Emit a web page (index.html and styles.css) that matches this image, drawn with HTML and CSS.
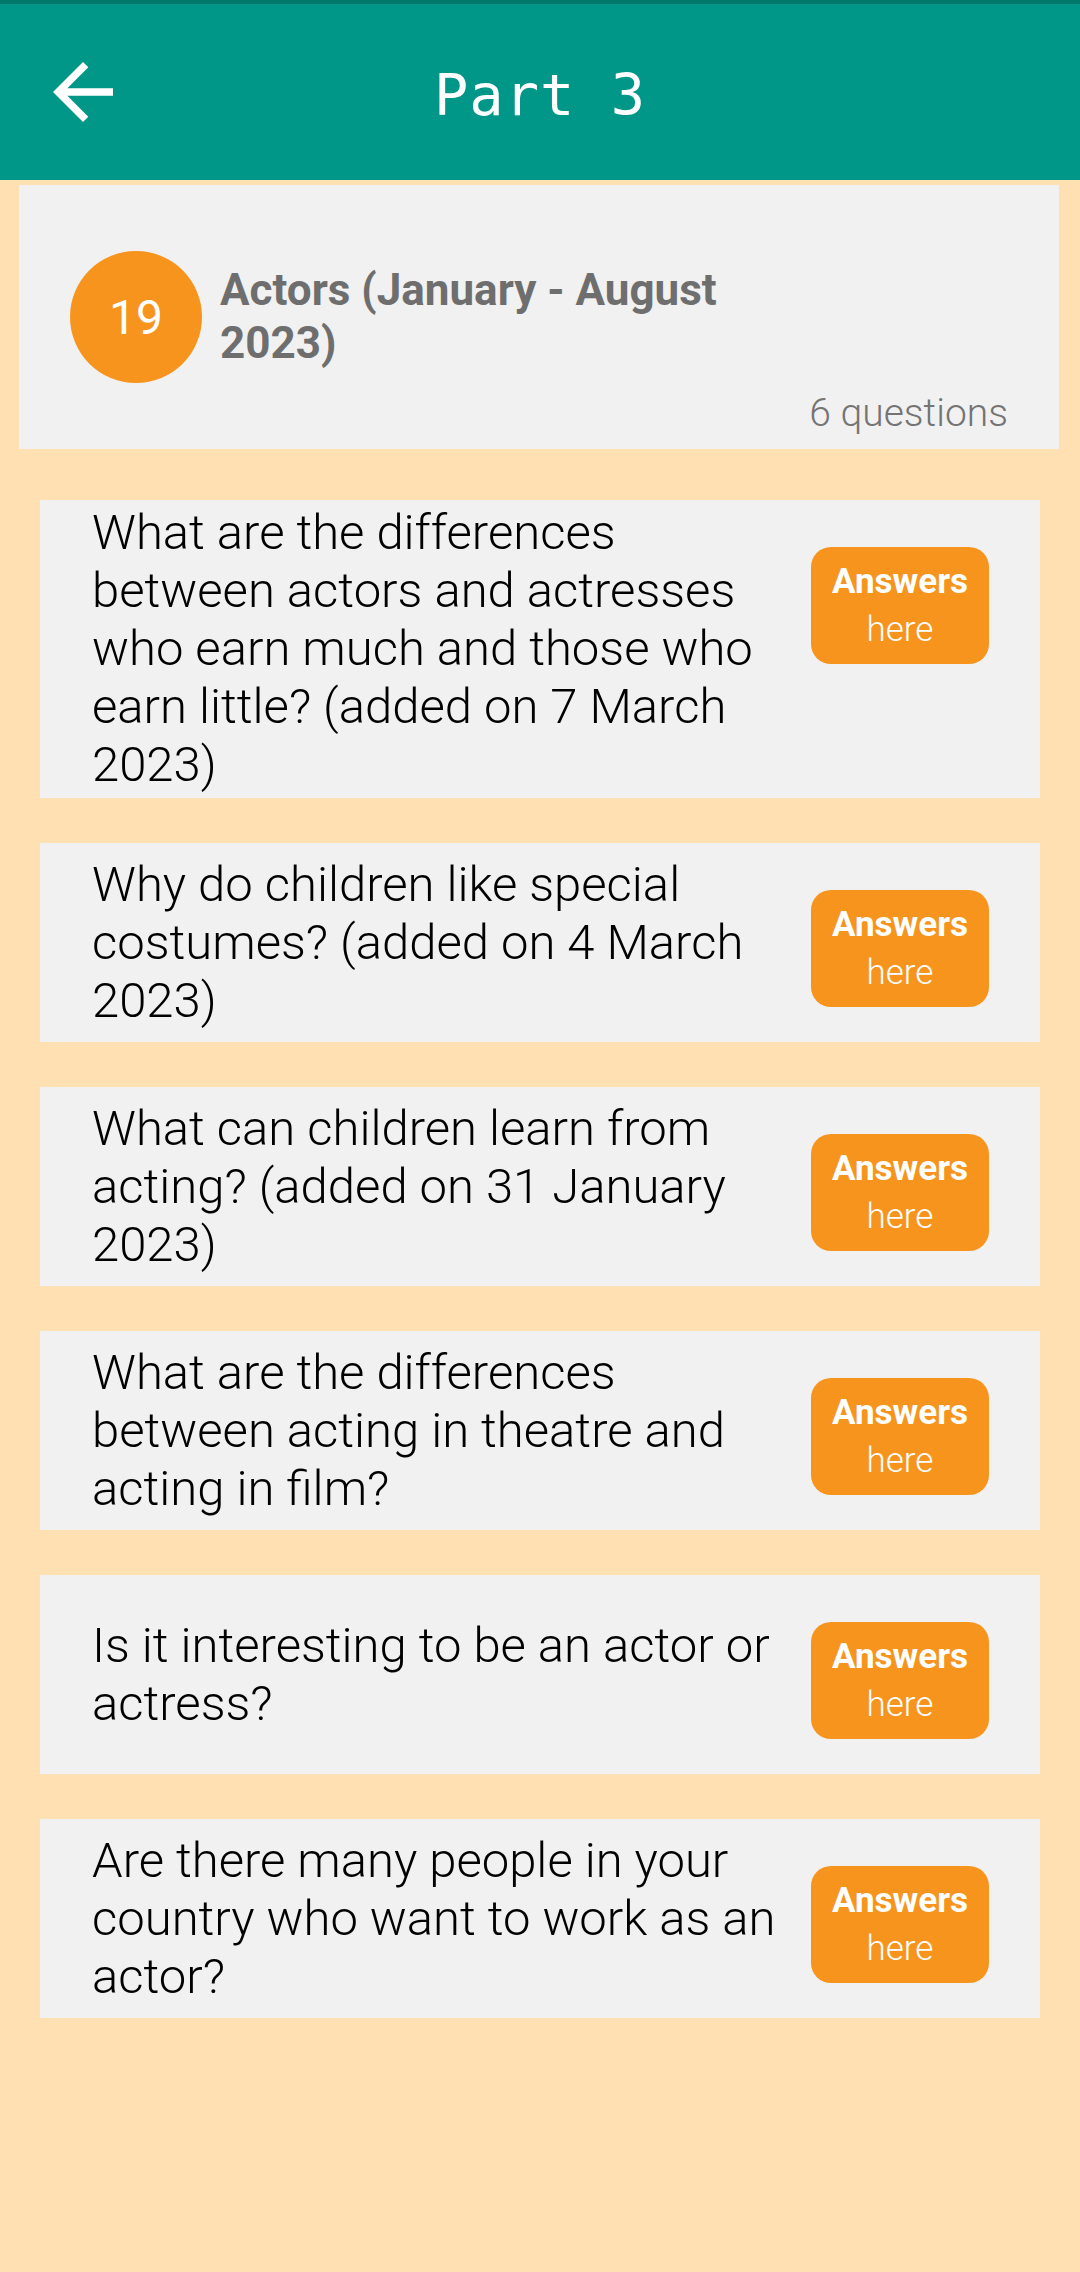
FILE: index.html
```html
<!DOCTYPE html>
<html lang="en">
<head>
<meta charset="utf-8">
<title>Part 3</title>
<link rel="stylesheet" href="styles.css">
</head>
<body>
<header class="appbar">
  <button class="back" aria-label="Back">
    <svg viewBox="0 0 24 24" width="90" height="90"><path fill="#fff" d="M20 11H7.830l5.59-5.59L12 4l-8 8 8 8 1.41-1.41L7.83 13H20v-2z"/></svg>
  </button>
  <h1 class="title">Part 3</h1>
  <span class="spacer"></span>
</header>

<section class="topic">
  <div class="topic-row">
    <div class="badge">19</div>
    <h2 class="topic-title">Actors (January - August 2023)</h2>
  </div>
  <div class="topic-count">6 questions</div>
</section>

<main class="list">
  <div class="q">
    <p class="q-text">What are the differences between actors and actresses who earn much and those who earn little? (added on 7 March 2023)</p>
    <a class="ans"><b>Answers</b><span>here</span></a>
  </div>
  <div class="q">
    <p class="q-text">Why do children like special costumes? (added on 4 March 2023)</p>
    <a class="ans"><b>Answers</b><span>here</span></a>
  </div>
  <div class="q">
    <p class="q-text">What can children learn from acting? (added on 31 January 2023)</p>
    <a class="ans"><b>Answers</b><span>here</span></a>
  </div>
  <div class="q">
    <p class="q-text">What are the differences between acting in theatre and acting in film?</p>
    <a class="ans"><b>Answers</b><span>here</span></a>
  </div>
  <div class="q">
    <p class="q-text">Is it interesting to be an actor or actress?</p>
    <a class="ans"><b>Answers</b><span>here</span></a>
  </div>
  <div class="q">
    <p class="q-text">Are there many people in your country who want to work as an actor?</p>
    <a class="ans"><b>Answers</b><span>here</span></a>
  </div>
</main>
</body>
</html>
```

FILE: styles.css
```css
* { box-sizing: border-box; }
html, body {
  margin: 0;
  padding: 0;
  background: #FFE0B2;
  font-family: Roboto, "Noto Sans", sans-serif;
  min-height: 2272px;
}
.appbar {
  height: 180px;
  border-top: 4px solid #00796B;
  background: #009688;
  display: grid;
  grid-template-columns: 1fr auto 1fr;
  align-items: center;
}
.back {
  justify-self: start;
  margin-left: 38px;
  padding: 0;
  border: 0;
  background: none;
  width: 90px;
  height: 90px;
  display: block;
}
.back svg { display: block; }
.title {
  margin: 0;
  padding-top: 6px;
  font-family: "DejaVu Sans Mono", "Liberation Mono", monospace;
  font-weight: 400;
  font-size: 57px;
  color: #fff;
  letter-spacing: 1px;
}
.topic {
  margin: 5px 21px 0 19px;
  background: #F1F1F1;
  padding: 66px 51px 13px 51px;
}
.topic-row {
  display: flex;
  align-items: center;
  gap: 18px;
}
.badge {
  width: 132px;
  height: 132px;
  flex: none;
  border-radius: 50%;
  background: #F7941E;
  color: #fff;
  font-size: 48px;
  display: flex;
  align-items: center;
  justify-content: center;
}
.topic-title {
  margin: 0;
  width: 540px;
  font-size: 44px;
  line-height: 53px;
  font-weight: 700;
  color: #6E6E6E;
}
.topic-count {
  margin-top: 8px;
  text-align: right;
  font-size: 39px;
  line-height: 45px;
  font-weight: 300;
  color: #747474;
}
.list {
  padding: 51px 40px 0;
  display: flex;
  flex-direction: column;
  gap: 45px;
}
.q {
  background: #F1F1F1;
  min-height: 199px;
  padding: 4px 51px 4px 52px;
  display: flex;
  align-items: center;
  gap: 10px;
}
.q-text {
  flex: 1;
  margin: 0;
  font-size: 49px;
  line-height: 58px;
  font-weight: 300;
  color: #000;
}
.ans {
  align-self: flex-start;
  margin-top: 43px;
  flex: none;
  width: 178px;
  height: 117px;
  border-radius: 20px;
  background: #F7941E;
  color: #fff;
  display: flex;
  flex-direction: column;
  align-items: center;
  justify-content: center;
  font-size: 35px;
  line-height: 48px;
}
.ans b { font-weight: 700; }
.ans span { font-weight: 300; }
```
